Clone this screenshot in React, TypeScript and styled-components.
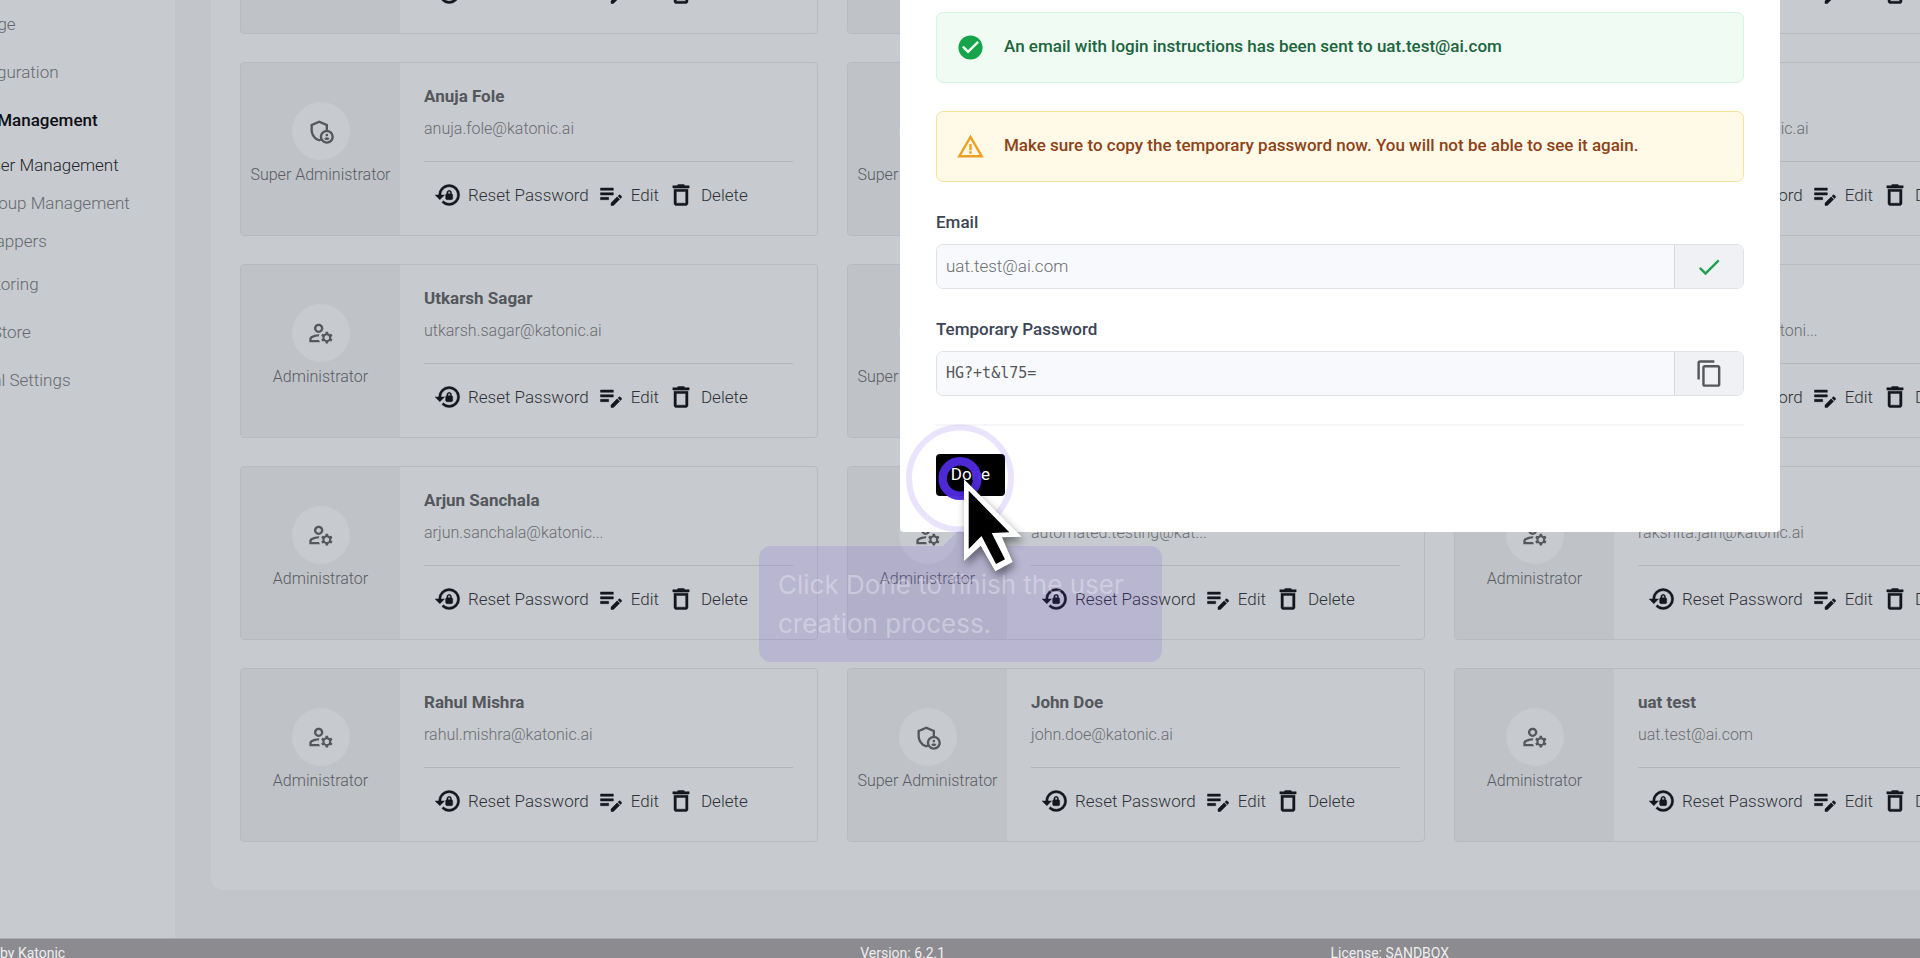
import React from "react";
import styled, { createGlobalStyle, css } from "styled-components";
import {
  MdCheck,
  MdCheckCircle,
  MdContentCopy,
  MdDeleteOutline,
  MdEditNote,
  MdLockReset,
  MdOutlineAdminPanelSettings,
  MdOutlineManageAccounts,
  MdWarningAmber,
} from "react-icons/md";

const GlobalStyle = createGlobalStyle`
  * { box-sizing: border-box; }
  body {
    margin: 0;
    overflow: hidden;
    font-family: Roboto, "Liberation Sans", sans-serif;
    font-size: 17px;
    font-weight: 300;
    background: #c2c5ca;
  }
  button, input { font: inherit; }
`;

const Page = styled.div`
  display: flex;
  flex-direction: column;
  height: 100vh;
  overflow: hidden;
  color: #585c62;
`;

const Body = styled.div`
  flex: 1;
  min-height: 0;
  display: flex;
`;

const Sidebar = styled.nav`
  flex: 0 0 175px;
  background: #c7cace;
  overflow: hidden;
`;

const NavList = styled.ul<{ $nested?: boolean }>`
  list-style: none;
  margin: 0;
  padding: ${(p) => (p.$nested ? 2 : 0)}px 0 0;
  display: flex;
  flex-direction: column;
  align-items: flex-start;
`;

const NavItem = styled.li<{ $nested?: boolean }>`
  display: flex;
  align-items: center;
  height: ${(p) => (p.$nested ? 38 : 48)}px;
  margin-left: ${(p) => (p.$nested ? -19 : -42)}px;
`;

const NavLink = styled.a<{ $state?: "open" | "current" }>`
  white-space: nowrap;
  text-decoration: none;
  color: #66696f;
  ${(p) => p.$state === "current" && css`color: #24272d;`}
  ${(p) => p.$state === "open" && css`color: #0c0f15; font-weight: 500;`}
`;

const Main = styled.main`
  flex: 1;
  min-width: 0;
  padding: 0 0 48px 36px;
  display: flex;
  overflow: hidden;
`;

const Panel = styled.section`
  flex: 1;
  min-width: 0;
  display: flex;
  flex-direction: column;
  justify-content: flex-end;
  padding: 0 0 48px 29px;
  border-radius: 0 0 0 12px;
  background: #c7cace;
`;

const CardGrid = styled.div`
  display: grid;
  grid-template-columns: repeat(3, minmax(578px, 34.4%));
  gap: 28px 29px;
`;

const Card = styled.article`
  display: flex;
  height: 174px;
  border: 1px solid #b7babf;
  border-radius: 4px;
  overflow: hidden;
`;

const RolePane = styled.div`
  flex: 0 0 159px;
  display: flex;
  flex-direction: column;
  align-items: center;
  padding-top: 39px;
  background: #bfc2c7;
`;

const Avatar = styled.div`
  display: flex;
  align-items: center;
  justify-content: center;
  width: 58px;
  height: 58px;
  margin-bottom: 3px;
  border-radius: 50%;
  background: #c7cace;
  font-size: 28px;
  color: #54575c;
`;

const Role = styled.span`
  font-size: 16px;
  line-height: 24px;
  white-space: nowrap;
`;

const Details = styled.div`
  flex: 1;
  min-width: 0;
  padding: 20px 24px 0;
`;

const Name = styled.h2`
  margin: 0;
  font-size: 17px;
  line-height: 26px;
  font-weight: 700;
  color: #54575c;
`;

const Mail = styled.p`
  margin: 7px 0 0;
  font-size: 16px;
  line-height: 26px;
  color: #6a6d72;
`;

const Actions = styled.div`
  display: flex;
  align-items: center;
  gap: 8px;
  margin-top: 19px;
  padding: 18px 0 0 10px;
  border-top: 1px solid #b2b5ba;
`;

const Action = styled.button`
  display: flex;
  align-items: center;
  gap: 6px;
  padding: 0;
  border: 0;
  background: none;
  color: #2e3137;
  line-height: 30px;
  svg { flex: none; font-size: 28px; color: #14171d; }
  svg path:last-child { stroke: currentColor; stroke-width: 0.4px; }
`;

const Footer = styled.footer`
  flex: 0 0 20px;
  display: flex;
  border-top: 1px solid #a9a9ae;
  background: #8c8b90;
  color: #eeeeef;
  font-size: 14px;
  font-weight: 400;
  line-height: 28px;
  white-space: nowrap;
  overflow: hidden;
`;

const FooterCell = styled.span<{ $width: number }>`
  flex: 0 0 ${(p) => p.$width}%;
`;

const Dialog = styled.div`
  position: absolute;
  top: 0;
  left: calc(50% - 60px);
  width: 880px;
  display: flex;
  flex-direction: column;
  gap: 28px;
  padding: 12px 36px 36px;
  background: #fff;
  border-radius: 0 0 4px 4px;
`;

const Alert = styled.div<{ $tone: "success" | "warning" }>`
  display: flex;
  gap: 19px;
  align-items: center;
  height: 71px;
  padding: 0 19px;
  border: 1px solid;
  border-radius: 7px;
  font-weight: 500;
  svg { flex: none; font-size: 29px; }
  p { margin: 0; padding-bottom: 3px; }
  ${(p) =>
    p.$tone === "success"
      ? css`background: #effbf3; border-color: #d3f6df; color: #20643e; svg { color: #16a34a; }`
      : css`background: #fff9e8; border-color: #f8e29b; color: #8d4318; svg { color: #f0a020; }`}
`;

const Field = styled.div`
  display: flex;
  flex-direction: column;
  gap: 10px;
`;

const Label = styled.label`
  line-height: 24px;
  font-weight: 500;
  color: #3b4556;
`;

const FieldRow = styled.div`
  display: flex;
  height: 45px;
  border: 1px solid #e0e1e6;
  border-radius: 7px;
  overflow: hidden;
`;

const Input = styled.input<{ $mono?: boolean }>`
  flex: 1;
  min-width: 0;
  border: 0;
  outline: 0;
  padding: 0 9px 2px;
  background: #f8f9fd;
  color: #6b6d71;
  ${(p) => p.$mono && css`font-family: "DejaVu Sans Mono", "Liberation Mono", monospace; font-size: 15px; font-weight: 400; color: #55575b;`}
`;

const FieldButton = styled.button<{ $done?: boolean }>`
  flex: 0 0 69px;
  display: flex;
  align-items: center;
  justify-content: center;
  padding: 0;
  border: 0;
  border-left: 1px solid #d5d6db;
  background: #eff1f5;
  color: ${(p) => (p.$done ? "#1fa04e" : "#55575b")};
  font-size: ${(p) => (p.$done ? 28 : 29)}px;
`;

const DialogFooter = styled.div`
  border-top: 2px solid #f6f6f8;
  padding-top: 28px;
`;

const DoneButton = styled.button`
  display: block;
  width: 69px;
  height: 42px;
  padding: 0 0 2px;
  border: 0;
  border-radius: 4px;
  background: #000;
  color: #fff;
  font-weight: 400;
`;

const Hint = styled.div`
  position: absolute;
  top: 546px;
  left: calc(50% - 201px);
  width: 403px;
  padding: 19px;
  border-radius: 12px;
  background: rgba(91, 40, 240, 0.12);
  color: rgba(255, 255, 255, 0.32);
  font: 400 26px/39px Inter, "Liberation Sans", sans-serif;
`;

const Pointer = styled.svg`
  position: absolute;
  top: 420px;
  left: calc(50% - 60px);
  width: 140px;
  height: 180px;
  pointer-events: none;
`;

const CursorShape = styled.g`
  filter: drop-shadow(2px 5px 4px rgba(0, 0, 0, 0.45));
`;

type Person = { name?: string; mail?: string; superAdmin?: boolean };

const people: Person[] = [
  {},
  {},
  {},
  { name: "Anuja Fole", mail: "anuja.fole@katonic.ai", superAdmin: true },
  { superAdmin: true },
  { mail: "amit.sharma@katonic.ai" },
  { name: "Utkarsh Sagar", mail: "utkarsh.sagar@katonic.ai" },
  { superAdmin: true },
  { mail: "automated.user@katoni..." },
  { name: "Arjun Sanchala", mail: "arjun.sanchala@katonic..." },
  { mail: "automated.testing@kat..." },
  { mail: "rakshita.jain@katonic.ai" },
  { name: "Rahul Mishra", mail: "rahul.mishra@katonic.ai" },
  { name: "John Doe", mail: "john.doe@katonic.ai", superAdmin: true },
  { name: "uat test", mail: "uat.test@ai.com" },
];

function UserCard({ name, mail, superAdmin }: Person) {
  return (
    <Card>
      <RolePane>
        <Avatar>{superAdmin ? <MdOutlineAdminPanelSettings /> : <MdOutlineManageAccounts />}</Avatar>
        <Role>{superAdmin ? "Super Administrator" : "Administrator"}</Role>
      </RolePane>
      <Details>
        <Name>{name || "\u00a0"}</Name>
        <Mail>{mail || "\u00a0"}</Mail>
        <Actions>
          <Action><MdLockReset />Reset Password</Action>
          <Action><MdEditNote />Edit</Action>
          <Action><MdDeleteOutline />Delete</Action>
        </Actions>
      </Details>
    </Card>
  );
}

function ClickPointer() {
  return (
    <Pointer viewBox="900 420 140 180" aria-hidden="true">
      <path d="M943 546 L957 532 Q960 530 963 532 L977 546Z" fill="#5b28f0" fillOpacity="0.12" />
      <circle cx="960" cy="478.5" r="51" fill="none" stroke="#6a48ee" strokeOpacity="0.15" strokeWidth="6" />
      <circle cx="960" cy="478.5" r="17.3" fill="none" stroke="#4f29dc" strokeOpacity="0.97" strokeWidth="8.5" />
      <CursorShape>
        <path d="M964 479.3 V561 L980.7 545.7 L995.3 571.3 L1012.7 562 L1002 537.3 L1021.7 536.7Z" fill="#fff" />
        <path d="M968.7 490.7 V549 L981.5 536 L996 564 L1005 559.3 L991.7 533 L1009.3 532.3Z" fill="#000" />
      </CursorShape>
    </Pointer>
  );
}

export default function App() {
  return (
    <>
      <GlobalStyle />
      <Page>
        <Body>
          <Sidebar>
            <NavList>
              <NavItem><NavLink href="#">Storage</NavLink></NavItem>
              <NavItem><NavLink href="#">Configuration</NavLink></NavItem>
              <NavItem><NavLink href="#" $state="open">User Management</NavLink></NavItem>
              <li>
                <NavList $nested>
                  <NavItem $nested><NavLink href="#" $state="current">User Management</NavLink></NavItem>
                  <NavItem $nested><NavLink href="#">Group Management</NavLink></NavItem>
                  <NavItem $nested><NavLink href="#">Mappers</NavLink></NavItem>
                </NavList>
              </li>
              <NavItem><NavLink href="#">Monitoring</NavLink></NavItem>
              <NavItem><NavLink href="#">App Store</NavLink></NavItem>
              <NavItem><NavLink href="#">Global Settings</NavLink></NavItem>
            </NavList>
          </Sidebar>
          <Main>
            <Panel>
              <CardGrid>
                {people.map((p, i) => <UserCard key={i} {...p} />)}
              </CardGrid>
            </Panel>
          </Main>
        </Body>
        <Footer>
          <FooterCell $width={44.8}>by Katonic</FooterCell>
          <FooterCell $width={24.5}>Version: 6.2.1</FooterCell>
          <FooterCell $width={24.5}>License: SANDBOX</FooterCell>
        </Footer>
      </Page>
      <Dialog role="dialog">
        <Alert $tone="success"><MdCheckCircle /><p>An email with login instructions has been sent to uat.test@ai.com</p></Alert>
        <Alert $tone="warning"><MdWarningAmber /><p>Make sure to copy the temporary password now. You will not be able to see it again.</p></Alert>
        <Field>
          <Label htmlFor="email">Email</Label>
          <FieldRow>
            <Input id="email" readOnly value="uat.test@ai.com" />
            <FieldButton $done aria-label="Copied"><MdCheck /></FieldButton>
          </FieldRow>
        </Field>
        <Field>
          <Label htmlFor="password">Temporary Password</Label>
          <FieldRow>
            <Input id="password" $mono readOnly value="HG?+t&l75=" />
            <FieldButton aria-label="Copy"><MdContentCopy /></FieldButton>
          </FieldRow>
        </Field>
        <DialogFooter><DoneButton>Done</DoneButton></DialogFooter>
      </Dialog>
      <Hint>Click Done to finish the user creation process.</Hint>
      <ClickPointer />
    </>
  );
}
